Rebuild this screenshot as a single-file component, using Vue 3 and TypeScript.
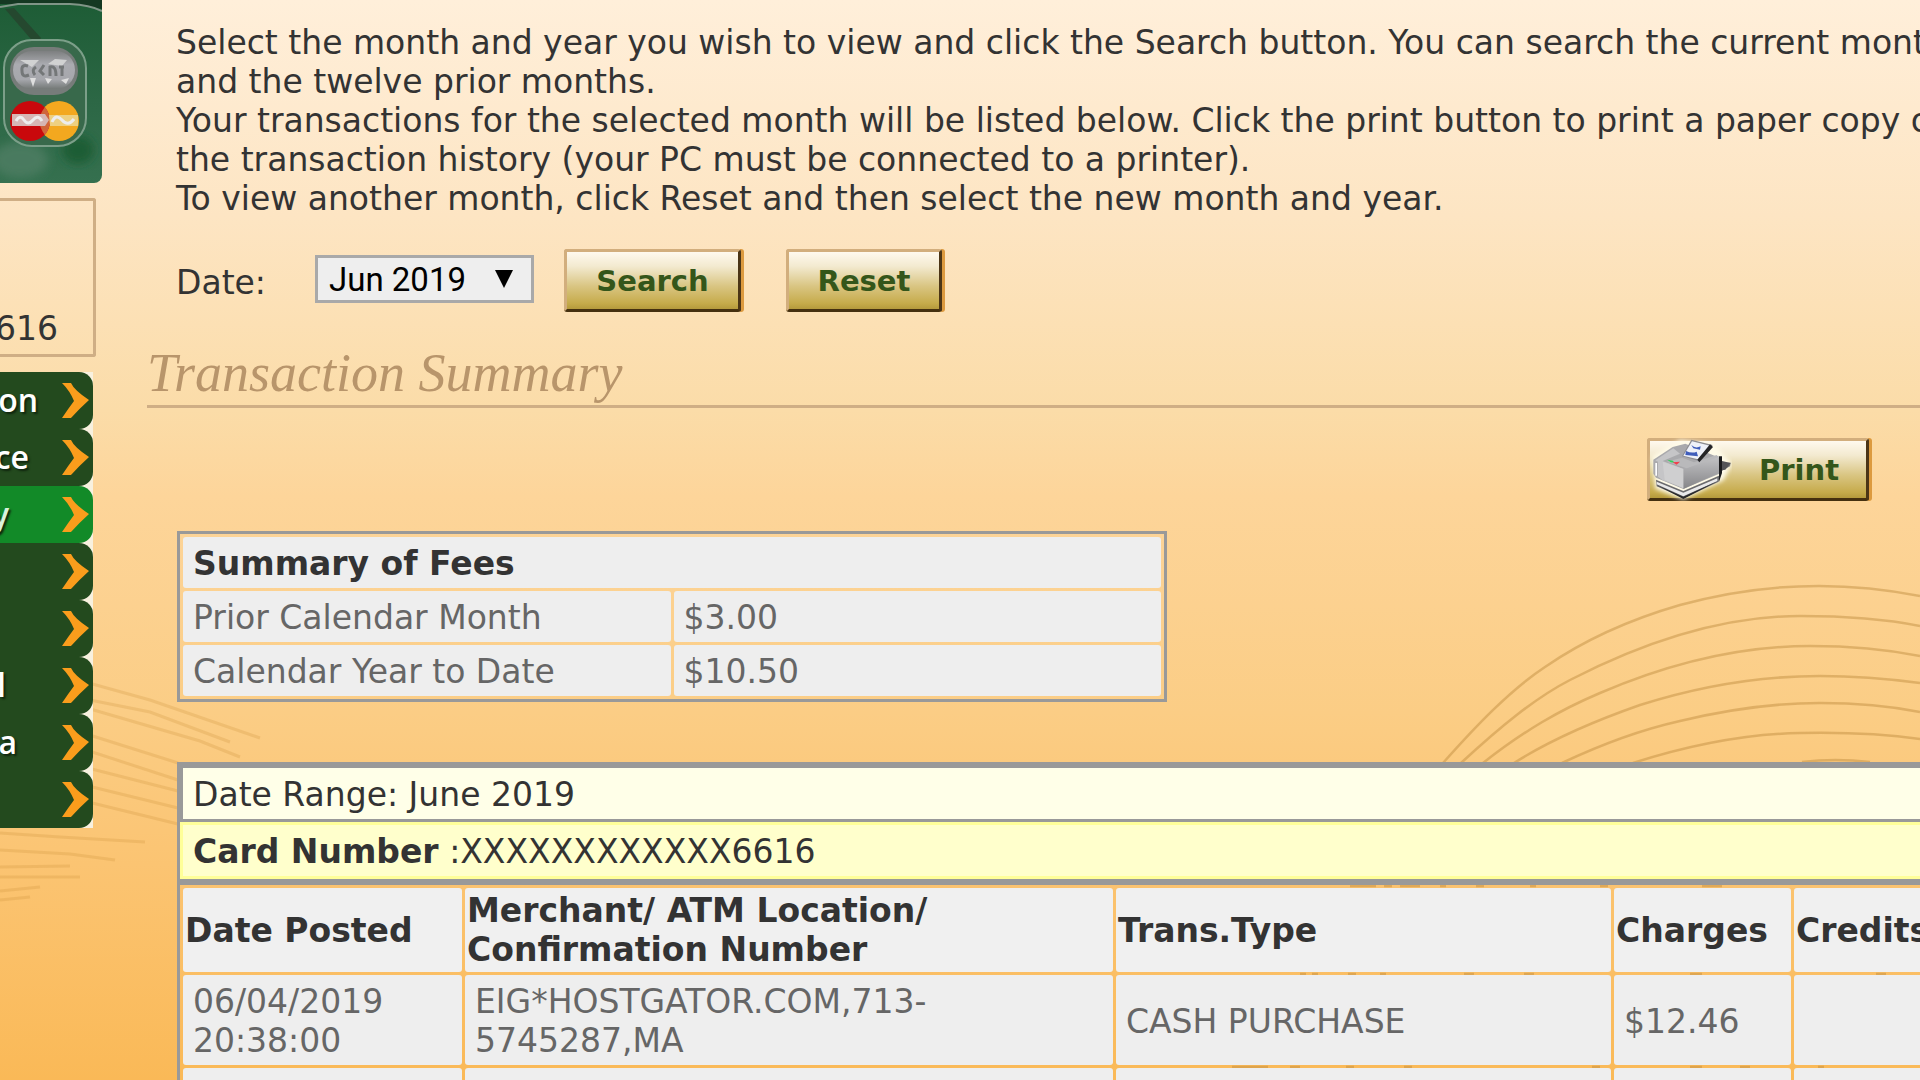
<script setup lang="ts">
import { ref } from 'vue'

interface MenuItem {
  label: string
  labelEnd: number
  active?: boolean
}

interface Transaction {
  posted: string[]
  merchant: string[]
  type: string
  charge: string
  credit: string
}

const menu: MenuItem[] = [
  { label: 'on', labelEnd: 38 },
  { label: 'ce', labelEnd: 29 },
  { label: 'y', labelEnd: 9, active: true },
  { label: '', labelEnd: 0 },
  { label: '', labelEnd: 0 },
  { label: 'l', labelEnd: 6 },
  { label: 'a', labelEnd: 17 },
  { label: '', labelEnd: 0 },
]

const fees = [
  { label: 'Prior Calendar Month', amount: '$3.00' },
  { label: 'Calendar Year to Date', amount: '$10.50' },
]

const transactions: Transaction[] = [
  {
    posted: ['06/04/2019', '20:38:00'],
    merchant: ['EIG*HOSTGATOR.COM,713-', '5745287,MA'],
    type: 'CASH PURCHASE',
    charge: '$12.46',
    credit: '',
  },
  { posted: [], merchant: [], type: '', charge: '', credit: '' },
]

const month = ref('Jun 2019')
</script>

<template>
  <div class="page">
    <svg class="backdrop" viewBox="0 0 1920 1080" preserveAspectRatio="xMidYMin slice" aria-hidden="true">
      <g fill="none" stroke="#bd8a3c" stroke-opacity=".45" stroke-width="2.5">
        <path d="M1443 763C1475 727 1510 690 1545 667C1590 636 1635 618 1680 605C1760 583 1840 580 1920 596" />
        <path d="M1461 763C1500 727 1535 698 1570 680C1640 644 1720 616 1800 616C1850 616 1885 619 1920 626" />
        <path d="M1483 763C1525 730 1560 710 1600 693C1670 663 1740 646 1810 646C1850 646 1885 649 1920 656" />
        <path d="M1514 763C1555 737 1600 719 1640 705C1700 686 1760 676 1820 676C1855 676 1890 679 1920 683" />
        <path d="M1562 763C1600 745 1640 730 1680 721C1730 709 1780 703 1820 703C1860 703 1890 706 1920 712" />
        <path d="M1633 763C1680 748 1740 734 1800 733C1850 732 1885 734 1920 739" />
        <path d="M1802 762Q1835 758 1870 762" />
        <path d="M1350 886H1376M1384 886H1392M1400 886H1420M1440 886H1446M1476 886H1484M1530 886H1536M1600 886H1608M1702 886H1722" />
        <path d="M1300 974H1306M1312 974H1318M1348 974H1356M1380 974H1386M1464 974H1474M1524 974H1534M1690 974H1702M1876 974H1886" />
        <path d="M1232 1067H1268M1290 1067H1300M1346 1067H1354M1404 1067H1412M1592 1067H1600M1690 1067H1702M1740 1067H1750M1818 1067H1824" />
      </g>
      <g fill="none" stroke="#c98f35" stroke-opacity=".24" stroke-width="3">
        <path d="M60 675L150 700L260 738" />
        <path d="M80 698L150 712L230 742" />
        <path d="M80 706L200 741L240 757" />
        <path d="M80 732L178 763" />
        <path d="M80 748L178 780" />
        <path d="M80 766L178 791" />
        <path d="M80 784L178 808" />
        <path d="M80 800L178 824" />
        <path d="M0 833L60 837L145 842" />
        <path d="M0 850L70 854L115 860" />
        <path d="M0 867L70 866" />
        <path d="M0 877L80 877" />
        <path d="M0 891L40 887" />
        <path d="M0 900L30 897" />
      </g>
    </svg>

    <aside class="sidebar">
      <svg class="card-art" viewBox="0 0 102 183" role="img" aria-label="Payment card">
        <defs>
          <linearGradient id="card" x1="0" y1="0" x2="0" y2="1">
            <stop offset="0" stop-color="#1d5c35" />
            <stop offset=".55" stop-color="#2c6745" />
            <stop offset="1" stop-color="#35704f" />
          </linearGradient>
          <linearGradient id="silver" x1="0" y1="0" x2="0" y2="1">
            <stop offset="0" stop-color="#7d7f80" />
            <stop offset=".35" stop-color="#aaabb0" />
            <stop offset=".75" stop-color="#a6a7ac" />
            <stop offset="1" stop-color="#747977" />
          </linearGradient>
          <filter id="soft" x="-20%" y="-20%" width="140%" height="140%"><feGaussianBlur stdDeviation="5" /></filter>
        </defs>
        <rect width="102" height="183" fill="url(#card)" />
        <ellipse cx="20" cy="160" rx="28" ry="18" fill="#487a5f" filter="url(#soft)" />
        <ellipse cx="78" cy="150" rx="16" ry="14" fill="#1e5d35" filter="url(#soft)" />
        <path d="M0 0H102V9L80 5L0 4Z" fill="#153822" />
        <path d="M0 7L18 4H70Q90 5 102 11" fill="none" stroke="#809587" stroke-width="2" />
        <path d="M5 9L14 8L41 38L36 45Z" fill="#25482f" />
        <rect x="4" y="40" width="82" height="106" rx="28" fill="#38694b" stroke="#7c9f89" stroke-width="2" />
        <rect x="10" y="47" width="68" height="48" rx="24" fill="#777c7a" />
        <rect x="13" y="51" width="62" height="38" rx="19" fill="url(#silver)" />
        <path d="M20 60L39 60L32 67ZM48 64L55 59L67 60L62 66Z" fill="#d1d2d2" />
        <path d="M30 78H36L33 87ZM45 78L52 79L48 84ZM61 80L69 78L66 84Z" fill="#dedede" />
        <path d="M28 66Q21 64 22 71Q22 78 29 75M36 67Q31 70 35 75M44 65L40 71L44 75M50 76V67Q56 65 56 76M59 67H64M62 67V76" fill="none" stroke="#747778" stroke-width="3" />
        <circle cx="59" cy="121" r="20" fill="#f3a81f" />
        <circle cx="30" cy="121" r="20" fill="#c9080c" />
        <path d="M45 107Q55 121 45 135Q34 121 45 107Z" fill="#d0653b" />
        <path d="M12 114H45L49 120L45 126H12Z" fill="#d6b6b4" />
        <path d="M49 115H78V126H50Z" fill="#eed080" />
        <path d="M16 121Q20 114 24 120T33 120T42 121M52 122Q56 113 62 120T74 119" fill="none" stroke="#ededed" stroke-width="3" />
      </svg>

      <section class="account">616</section>

      <nav class="menu" aria-label="Account">
        <a v-for="(item, i) in menu" :key="i" href="#" class="menu-item" :class="{ active: item.active }">
          <span class="menu-label" :style="{ width: item.labelEnd + 'px' }">{{ item.label }}</span>
          <svg class="chevron" viewBox="0 0 28 36" aria-hidden="true">
            <path d="M0 0H9Q12 7 27 17Q17 26 9 35H0Q6 26 12 18Q8 8 0 0Z" fill="#fa9d1c" />
          </svg>
        </a>
      </nav>
    </aside>

    <main class="content">
      <p class="intro">
        Select the month and year you wish to view and click the Search button. You can search the current month<br />
        and the twelve prior months.<br />
        Your transactions for the selected month will be listed below. Click the print button to print a paper copy of<br />
        the transaction history (your PC must be connected to a printer).<br />
        To view another month, click Reset and then select the new month and year.
      </p>

      <form class="filter" @submit.prevent>
        <label class="filter-label" for="month">Date:</label>
        <div class="select-box">
          <select id="month" v-model="month">
            <option>Jun 2019</option>
          </select>
          <svg class="arrow" viewBox="0 0 18 18" aria-hidden="true"><path d="M0 0H18L9 18Z" /></svg>
        </div>
        <button type="submit" class="gold search">Search</button>
        <button type="button" class="gold reset">Reset</button>
      </form>

      <h2 class="heading">Transaction Summary</h2>

      <div class="actions">
        <button type="button" class="gold print">
          <svg class="printer" viewBox="51 53 255 189" aria-hidden="true">
            <defs>
              <filter id="halo" x="-20%" y="-20%" width="140%" height="140%"><feGaussianBlur stdDeviation="6" /></filter>
              <linearGradient id="side" x1="0" y1="0" x2="0" y2="1">
                <stop offset="0" stop-color="#c4c4c6" />
                <stop offset="1" stop-color="#858588" />
              </linearGradient>
            </defs>
            <path d="M66 110L150 58L250 70L306 130L280 180L160 238L76 205Z" fill="#fffbe8" filter="url(#halo)" />
            <path d="M78 178L160 212L270 165L266 184L162 234L80 198Z" fill="#6b6b6e" />
            <path d="M80 184L160 217L262 174V182L160 228L80 192Z" fill="#e9e9ea" />
            <path d="M80 194L160 229L262 183L160 236Z" fill="#29292b" />
            <path d="M256 128L302 127L300 138L268 156Z" fill="#77777a" />
            <path d="M70 118L128 80L166 70L268 112V160L160 206L78 172L70 160Z" fill="#a9a9ac" />
            <path d="M76 120L130 84L150 100L98 122L160 146V202L98 180L82 168Z" fill="#c5c5c7" />
            <path d="M160 142L266 106V158L160 206Z" fill="url(#side)" />
            <path d="M156 112L192 126L260 104L266 110L170 144L110 124Z" fill="#b9b9bb" />
            <path d="M98 124L160 146V204L104 178Z" fill="#cfcfd0" />
            <path d="M72 118L84 124V172L72 162Z" fill="#ababae" />
            <path d="M76 128H81V166H76Z" fill="#fff" />
            <path d="M267 108H276V158L267 184Z" fill="#1c1c1e" />
            <path d="M276 122L302 128L286 148L276 150Z" fill="#545457" />
            <path d="M112 118L128 121L134 127L122 126Z" fill="#2fd35b" />
            <path d="M128 126L150 124L140 133Z" fill="#f23e4b" />
            <path d="M156 108L184 58L248 74L208 122Z" fill="#8c8c90" />
            <path d="M160 106L186 63L240 76L204 117Z" fill="#eef1f8" />
            <path d="M240 72L249 80L208 126L202 118Z" fill="#252527" />
            <path d="M184 74Q196 86 212 78L210 88L190 84ZM168 92Q186 100 200 94L204 108L166 104Z" fill="#3f5dbb" />
          </svg>
          <span>Print</span>
        </button>
      </div>

      <table class="fees">
        <thead>
          <tr><th colspan="2" scope="colgroup">Summary of Fees</th></tr>
        </thead>
        <tbody>
          <tr v-for="fee in fees" :key="fee.label">
            <td>{{ fee.label }}</td>
            <td>{{ fee.amount }}</td>
          </tr>
        </tbody>
      </table>

      <section class="history">
        <div class="range">Date Range: June 2019</div>
        <div class="card-number"><b>Card Number</b> :XXXXXXXXXXXX6616</div>
        <table class="transactions">
          <colgroup>
            <col class="col-date" />
            <col class="col-merchant" />
            <col class="col-type" />
            <col class="col-charges" />
            <col />
          </colgroup>
          <thead>
            <tr>
              <th scope="col">Date Posted</th>
              <th scope="col">Merchant/ ATM Location/<br />Confirmation Number</th>
              <th scope="col">Trans.Type</th>
              <th scope="col">Charges</th>
              <th scope="col">Credits</th>
            </tr>
          </thead>
          <tbody>
            <tr v-for="(t, i) in transactions" :key="i">
              <td><div v-for="line in t.posted" :key="line">{{ line }}</div></td>
              <td><div v-for="line in t.merchant" :key="line">{{ line }}</div></td>
              <td>{{ t.type }}</td>
              <td>{{ t.charge }}</td>
              <td>{{ t.credit }}</td>
            </tr>
          </tbody>
        </table>
      </section>
    </main>
  </div>
</template>

<style>
body {
  margin: 0;
  overflow: hidden;
}
</style>

<style scoped>
.page {
  position: relative;
  display: flex;
  gap: 45px;
  height: 100vh;
  overflow: hidden;
  background: linear-gradient(#ffefda 0, #fde5c3 20%, #fbdca8 38%, #fdd59a 46%, #fbcd85 66%, #fbc472 80%, #fab957 100%);
  color: #333;
  font: 33px/39px "DejaVu Sans", Verdana, sans-serif;
}

.backdrop {
  position: absolute;
  top: 0;
  left: 0;
  width: 100%;
}

.sidebar {
  position: relative;
  flex: none;
  width: 102px;
}

.card-art {
  display: block;
  width: 102px;
  height: 183px;
  border-bottom-right-radius: 8px;
}

.account {
  box-sizing: border-box;
  display: flex;
  align-items: flex-end;
  justify-content: flex-end;
  width: 96px;
  height: 159px;
  margin: 15px 0;
  padding: 0 35px 6px 0;
  border: 3px solid #cfae85;
  border-left: 0;
  border-top-right-radius: 3px;
  border-bottom-right-radius: 3px;
}

.menu {
  width: 93px;
  background: #f8f1df;
}

.menu-item {
  display: flex;
  align-items: center;
  justify-content: space-between;
  height: 57px;
  padding-right: 3px;
  border-radius: 0 14px 14px 0;
  background: #234a1e;
  color: #fff;
  font: 600 32px/39px "Open Sans", "Noto Sans", sans-serif;
  text-decoration: none;
  text-shadow: 2px 2px 2px #10260e;
}

.menu-item.active {
  background: #128a28;
  color: #d9f2dc;
}

.menu-label {
  display: flex;
  justify-content: flex-end;
  height: 42px;
}

.chevron {
  flex: none;
  width: 28px;
  height: 36px;
}

.content {
  position: relative;
  flex: 1;
  min-width: 0;
}

.intro {
  margin: 0;
  padding: 23px 0 0 29px;
  white-space: nowrap;
}

.filter {
  display: flex;
  align-items: center;
  margin-top: 31px;
  padding-left: 29px;
}

.filter-label {
  width: 139px;
  padding-top: 3px;
}

.select-box {
  position: relative;
  width: 219px;
  margin: 0 30px 3px 0;
}

select {
  display: block;
  box-sizing: border-box;
  width: 100%;
  height: 48px;
  padding: 0 11px;
  appearance: none;
  border: 3px solid #a9a9a9;
  border-radius: 0;
  background: #eee;
  color: #000;
  font: 33px/39px Roboto, "Liberation Sans", sans-serif;
}

.arrow {
  position: absolute;
  top: 15px;
  right: 21px;
  width: 18px;
  height: 18px;
  pointer-events: none;
}

.gold {
  box-sizing: border-box;
  height: 63px;
  padding: 0;
  border: 3px solid #d2ae7d;
  border-right-color: #4b3516;
  border-bottom-color: #45300f;
  border-radius: 3px;
  background: linear-gradient(#fff9ee, #f3ead0 25%, #d9c582 60%, #c6ab4b 90%, #b59a3c);
  box-shadow: 3px 0 0 #dc9a3f;
  color: #34561a;
  font: bold 29px/36px "DejaVu Sans", Verdana, sans-serif;
}

.search {
  width: 177px;
  margin-right: 45px;
}

.reset {
  width: 156px;
}

.heading {
  margin: 0;
  padding: 31px 0 2px;
  border-bottom: 3px solid #cfae85;
  color: #b8956b;
  font: italic 54px/60px "Liberation Serif", "Times New Roman", serif;
}

.actions {
  display: flex;
  justify-content: flex-end;
  margin: 30px 51px 30px 0;
}

.print {
  position: relative;
  width: 222px;
  padding-left: 82px;
}

.printer {
  position: absolute;
  top: -3px;
  left: -3px;
  width: 85px;
  height: 63px;
}

table {
  border-spacing: 3px;
  table-layout: fixed;
}

th,
td {
  border-radius: 3px;
  background: #eee;
  text-align: left;
}

td {
  padding: 7px 10px 5px;
  color: #666;
}

.fees {
  width: 990px;
  margin-left: 30px;
  border: 3px solid #999;
}

.fees th {
  padding: 7px 10px 5px;
}

.history {
  width: 1920px;
  margin: 60px 0 0 30px;
  border: 3px solid #999;
}

.range {
  padding: 7px 10px 5px;
  border: 3px solid #999;
  background: #ffffe8;
}

.card-number {
  padding: 7px 10px 5px;
  border: 3px solid #ff9;
  background: #ffc;
}

.transactions {
  width: 100%;
  border-top: 6px solid #999;
}

.transactions th {
  padding: 3px 2px;
  background: #f0f0f0;
  white-space: nowrap;
}

.transactions td {
  height: 78px;
}

.col-date {
  width: 279px;
}

.col-merchant {
  width: 648px;
}

.col-type {
  width: 495px;
}

.col-charges {
  width: 177px;
}
</style>
